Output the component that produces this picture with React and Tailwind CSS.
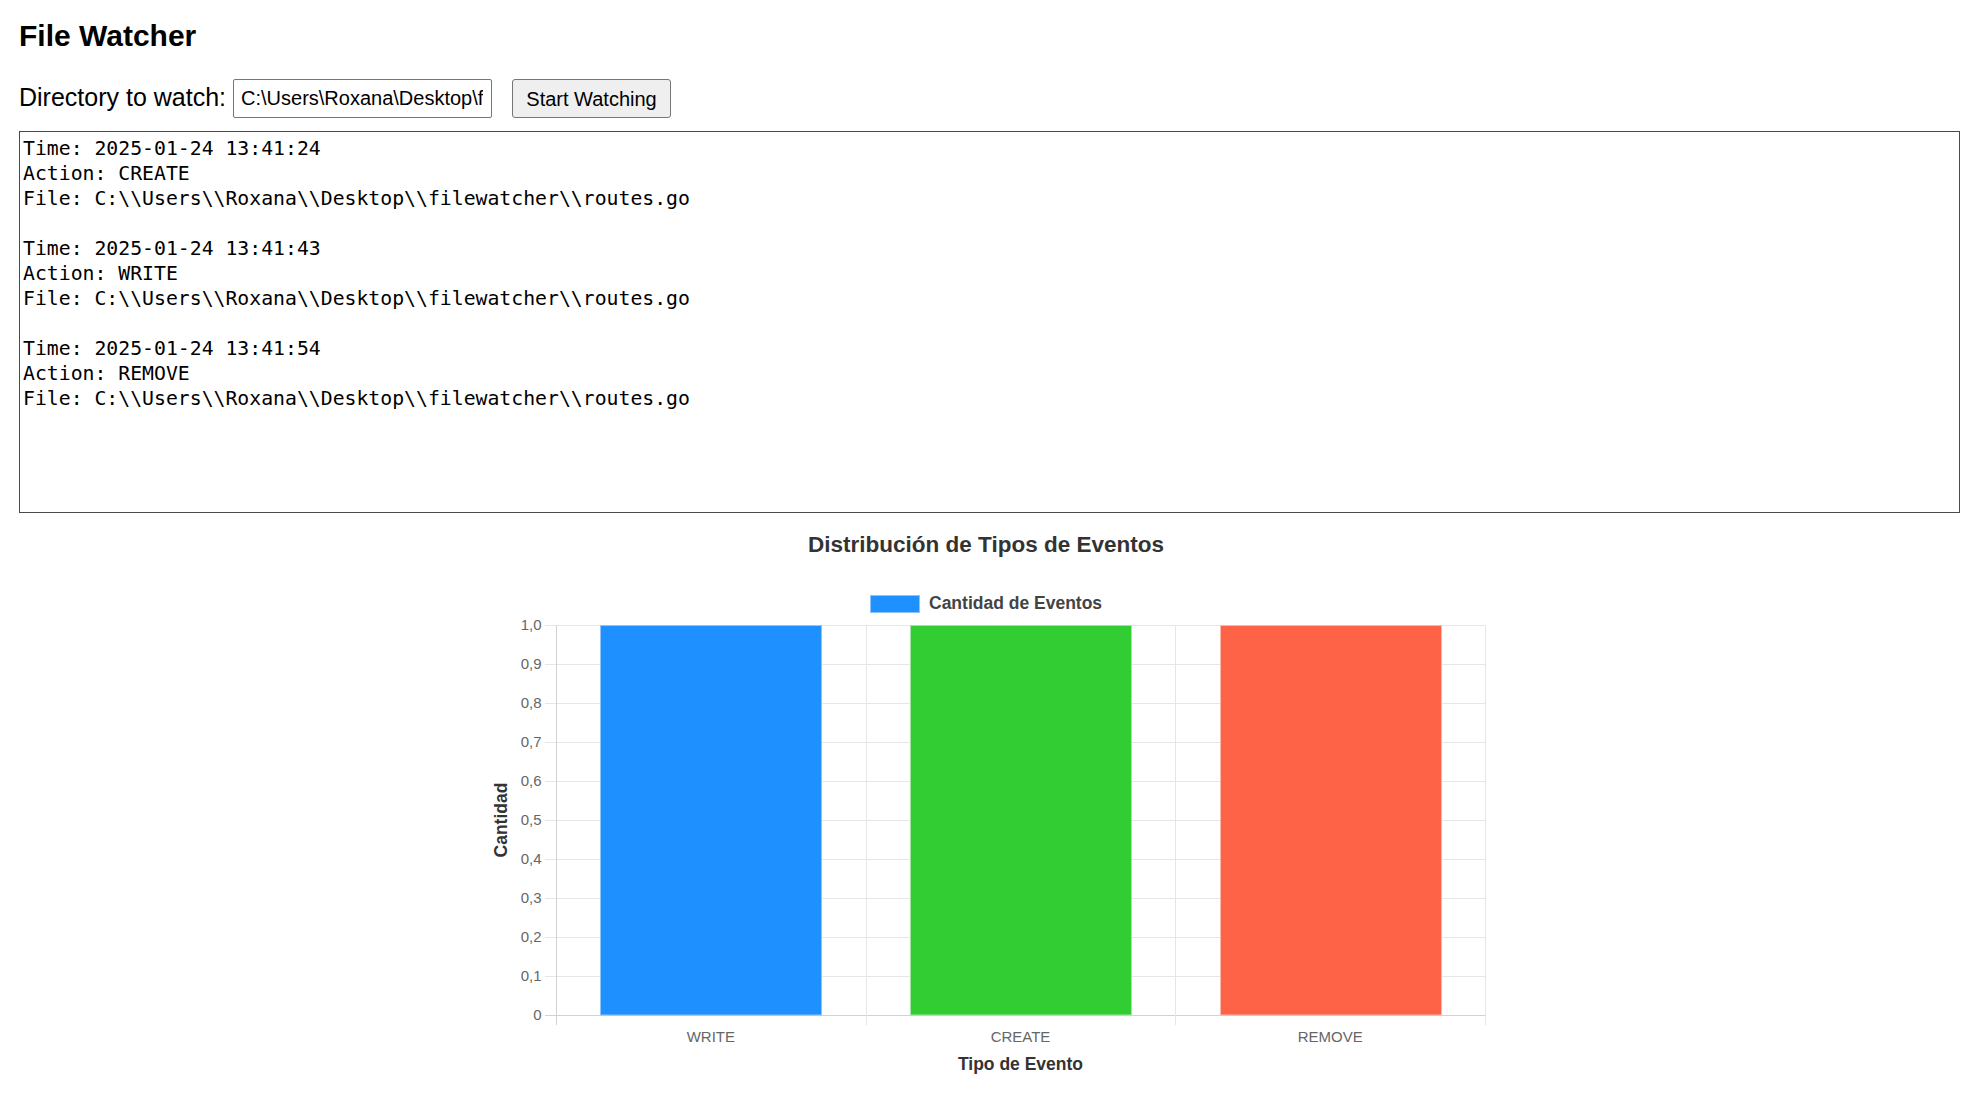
const LOG = String.raw`Time: 2025-01-24 13:41:24
Action: CREATE
File: C:\\Users\\Roxana\\Desktop\\filewatcher\\routes.go

Time: 2025-01-24 13:41:43
Action: WRITE
File: C:\\Users\\Roxana\\Desktop\\filewatcher\\routes.go

Time: 2025-01-24 13:41:54
Action: REMOVE
File: C:\\Users\\Roxana\\Desktop\\filewatcher\\routes.go`;

const bars = [
  { label: "WRITE", fill: "#1E90FF", stroke: "#8cc4fb" },
  { label: "CREATE", fill: "#32CD32", stroke: "#a3e3a3" },
  { label: "REMOVE", fill: "#FF6347", stroke: "#fbb7aa" },
];

const ticks = ["1,0", "0,9", "0,8", "0,7", "0,6", "0,5", "0,4", "0,3", "0,2", "0,1", "0"];

function EventChart() {
  // plot area inside the svg
  const left = 71;
  const right = 1000;
  const top = 112;
  const bottom = 502;
  const step = (bottom - top) / 10;
  const cat = (right - left) / 3;
  const font = "'Liberation Sans', Arial, sans-serif";

  return (
    <svg width="1010" height="580" className="block ml-[466px]" fontFamily={font}>
      <text x="501" y="38.5" textAnchor="middle" fontSize="22.5" fontWeight="bold" fill="#333">
        Distribución de Tipos de Eventos
      </text>

      {/* legend */}
      <rect x="385.5" y="82.5" width="49" height="17" fill="#1E90FF" stroke="#8cc4fb" />
      <text x="444" y="95.8" fontSize="17.5" fontWeight="bold" fill="#444">
        Cantidad de Eventos
      </text>

      {/* horizontal grid + y ticks */}
      {ticks.map((t, i) => {
        const y = top + i * step;
        const yy = Math.round(y) + 0.5;
        return (
          <g key={t}>
            <line x1={60} x2={right} y1={yy} y2={yy} stroke={i === 10 ? "#d2d2d2" : "#e6e6e6"} />
            <text x="56.5" y={y + 5.3} textAnchor="end" fontSize="15" fill="#666">
              {t}
            </text>
          </g>
        );
      })}

      {/* vertical grid */}
      {[0, 1, 2, 3].map((i) => {
        const x = Math.round(left + i * cat) + 0.5;
        return (
          <line key={i} x1={x} x2={x} y1={top} y2={bottom + 10} stroke={i === 0 ? "#d2d2d2" : "#e6e6e6"} />
        );
      })}

      {/* bars */}
      {bars.map((b, i) => {
        const cx = left + cat * i + cat / 2;
        return (
          <g key={b.label}>
            <rect
              x={Math.round(cx - 110.5) + 0.5}
              y={top + 0.5}
              width="221"
              height={bottom - top - 0.5}
              fill={b.fill}
              stroke={b.stroke}
            />
            <text x={cx} y="529" textAnchor="middle" fontSize="15" fill="#666">
              {b.label}
            </text>
          </g>
        );
      })}

      <text x={(left + right) / 2} y="557" textAnchor="middle" fontSize="17.5" fontWeight="bold" fill="#333">
        Tipo de Evento
      </text>
      <text
        transform="translate(21.5 307) rotate(-90)"
        textAnchor="middle"
        fontSize="17.5"
        fontWeight="bold"
        fill="#333"
      >
        Cantidad
      </text>
    </svg>
  );
}

export default function App() {
  return (
    <div className="min-h-screen bg-white text-black pl-[19px] pt-[19px] font-['Liberation_Sans',Arial,sans-serif]">
      <h2 className="m-0 text-[30px] leading-[34px] font-bold">File Watcher</h2>

      {/* directory row */}
      <div className="mt-[26px] flex items-start h-[39px]">
        <label className="mt-[4px] text-[25px] leading-[29px]">Directory to watch:</label>
        <input
          type="text"
          readOnly
          value="C:\Users\Roxana\Desktop\filewatcher"
          className="ml-[7px] w-[259px] h-[39px] border border-[#767676] rounded-[2px] pl-[7px] pr-[8px] text-[20px] text-black bg-white outline-none"
        />
        <button className="ml-[20px] w-[159px] h-[39px] border border-[#767676] rounded-[3px] bg-[#efefef] text-[20px] leading-[22px] text-black">
          Start Watching
        </button>
      </div>

      {/* event log */}
      <div className="mt-[13px] w-[1941px] h-[382px] border border-[#4a4a4a] px-[3px] pt-[4px] overflow-hidden whitespace-pre font-['DejaVu_Sans_Mono',monospace] text-[19.8px] leading-[25px] text-black">
        {LOG}
      </div>

      <EventChart />
    </div>
  );
}
